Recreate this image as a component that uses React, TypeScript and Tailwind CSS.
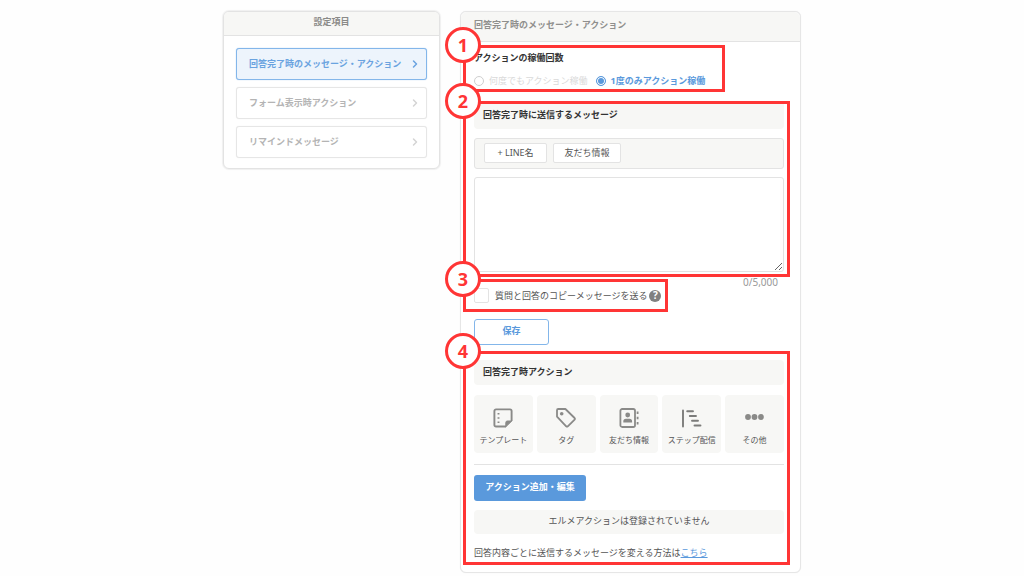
import { useState } from 'react'
import type { ReactNode } from 'react'
import { ChevronRight } from 'lucide-react'

const menuItems = ['回答完了時のメッセージ・アクション', 'フォーム表示時アクション', 'リマインドメッセージ']

function TemplateIcon() {
  return (
    <svg viewBox="0 0 20 20" className="size-5" fill="none" stroke="#8a8a88" strokeWidth="1.9">
      <path d="M13 18.5H3A1.6 1.6 0 0 1 1.4 16.9V3A1.6 1.6 0 0 1 3 1.4H17A1.6 1.6 0 0 1 18.6 3V13" />
      <path d="M12.8 18.8V14.5A1.5 1.5 0 0 1 14.3 13H18.8Z" fill="#8a8a88" strokeWidth="1" />
      <path d="M5.5 5v1.5M5.5 9.2v1.5M5.5 13.4v1.5" />
    </svg>
  )
}

function TagIcon() {
  return (
    <svg viewBox="0 0 20 20" className="size-5" fill="none" stroke="#8a8a88" strokeWidth="1.8">
      <path d="M1 2.2V8.6L10.2 18.3Q11 19 11.800 18.3L18.6 11.6Q19.3 10.8 18.6 10L9.400 1H2.2Q1 1 1 2.2Z" strokeLinejoin="round" />
      <circle cx="5.7" cy="5.7" r="1.8" fill="#8a8a88" stroke="none" />
    </svg>
  )
}

function FriendIcon() {
  return (
    <svg viewBox="0 0 20 20" className="size-5" fill="none" stroke="#8a8a88" strokeWidth="1.8">
      <rect x="1.4" y="1" width="14.6" height="18" rx="1.8" />
      <circle cx="8.7" cy="7" r="2.4" fill="#8a8a88" stroke="none" />
      <path d="M4.3 14.6V13.4Q4.3 10.8 7 10.8H10.4Q13.1 10.8 13.1 13.4V14.6Z" fill="#8a8a88" stroke="none" />
      <path d="M18.6 3.5V6M18.6 8.8V11.2M18.6 14V16.5" />
    </svg>
  )
}

function StepIcon() {
  return (
    <svg viewBox="0 0 20 20" className="size-5" fill="none" stroke="#7c7c7a" strokeWidth="1.9" strokeLinecap="round">
      <path d="M1 2.5V18.5M5.2 3.2H11M7.8 8H14M10 12.800H16M12.500 17.500H18.500" />
    </svg>
  )
}

function MoreIcon() {
  return (
    <svg viewBox="0 0 20 20" className="size-5" fill="#8a8a88">
      <circle cx="3" cy="9" r="2.9" />
      <circle cx="9.5" cy="9" r="2.9" />
      <circle cx="16" cy="9" r="2.9" />
    </svg>
  )
}

const actions = [
  { label: 'テンプレート', icon: <TemplateIcon /> },
  { label: 'タグ', icon: <TagIcon /> },
  { label: '友だち情報', icon: <FriendIcon /> },
  { label: 'ステップ配信', icon: <StepIcon /> },
  { label: 'その他', icon: <MoreIcon /> },
]

// Red frame with a numbered badge on its top left corner
function Step({ no, className, children }: { no: number; className: string; children: ReactNode }) {
  return (
    <section className={`relative border-[3px] border-[#ff3535] pl-2 pr-[3px] ${className}`}>
      {children}
      <span className="absolute -left-[21px] -top-[21px] flex size-9 items-center justify-center rounded-full border-[3px] border-[#ff3535] bg-white font-['Noto_Sans'] text-lg font-bold text-[#ff3535]">
        {no}
      </span>
    </section>
  )
}

const radioClass =
  'size-[10px] shrink-0 appearance-none rounded-full border border-[#cfcfcf] bg-white checked:border-[#5a99dc] checked:bg-[#5a99dc] checked:shadow-[inset_0_0_0_1px_#fff]'

export default function App() {
  const [current, setCurrent] = useState(0)
  const [once, setOnce] = useState(true)
  const [message, setMessage] = useState('')

  return (
    <div
      lang="ja"
      className="min-h-screen bg-[#fefefe] pt-[11px] font-['Noto_Sans','Noto_Sans_CJK_JP',sans-serif] text-[9px] text-[#555]"
    >
      <div className="mx-auto grid w-full max-w-[578px] grid-cols-[217px_1fr] items-start gap-5">
        <aside className="overflow-hidden rounded-md border border-[#e3e3e3] bg-white shadow-[0_0_1px_1px_#f0f0f0]">
          <h2 className="flex h-6 items-center justify-center border-b border-[#e3e3e3] bg-[#f7f7f5] pb-[3px] font-bold text-[#8a8a88]">
            設定項目
          </h2>
          <nav className="flex flex-col gap-[7px] px-3 pb-[10px] pt-3">
            {menuItems.map((item, i) => (
              <button
                key={item}
                onClick={() => setCurrent(i)}
                className={`flex h-8 items-center justify-between rounded-[3px] border pl-3 pr-[5px] font-bold ${
                  i === current
                    ? 'border-[#83b6ea] bg-[#edf4fc] text-[#6aa3e0] shadow-[0_0_1px_#83b6ea]'
                    : 'border-[#e6e6e6] bg-white text-[#b4b4b4] shadow-[0_0_1px_#e6e6e6]'
                }`}
              >
                {item}
                <ChevronRight className={i === current ? 'size-3' : 'size-3 text-[#d4d4d4]'} strokeWidth={3} />
              </button>
            ))}
          </nav>
        </aside>

        <main className="rounded-md border border-[#e6e6e6] bg-white pb-[7px] shadow-[0_0_1px_#e6e6e6]">
          <h1 className="flex h-[30px] items-center rounded-t-md border-b border-[#e3e3e3] bg-[#f7f7f5] px-[13px] pb-[3px] font-bold text-[#8f8f8d]">
            回答完了時のメッセージ・アクション
          </h1>

          <div className="ml-[2px] mr-[10px] mt-[3px]">
            <Step no={1} className="max-w-[262px]">
              <h3 className="font-bold leading-[19px] text-[#333]">アクションの稼働回数</h3>
              <div className="mt-[5px] flex h-[17px] items-center gap-2">
                <label className="flex items-center gap-[5px] whitespace-nowrap text-[#dadada]">
                  <input type="radio" name="count" checked={!once} onChange={() => setOnce(false)} className={radioClass} />
                  何度でもアクション稼働
                </label>
                <label className="flex items-center gap-[5px] whitespace-nowrap font-bold text-[#5a99dc]">
                  <input type="radio" name="count" checked={once} onChange={() => setOnce(true)} className={radioClass} />
                  1度のみアクション稼働
                </label>
              </div>
            </Step>

            <Step no={2} className="mt-[9px] pb-[2px]">
              <h3 className="flex h-[25px] items-center rounded-b bg-[#f7f7f5] px-[9px] pb-[3px] font-bold text-[#333]">
                回答完了時に送信するメッセージ
              </h3>
              <div className="mt-[9px] flex h-[31px] items-center gap-[6px] rounded-[3px] border border-[#e3e3e3] bg-[#f7f7f5] px-[9px] pb-[2px]">
                <button className="h-5 w-[63px] whitespace-nowrap rounded-[2px] border border-[#e3e3e3] bg-white">+ LINE名</button>
                <button className="h-5 w-[68px] whitespace-nowrap rounded-[2px] border border-[#e3e3e3] bg-white">友だち情報</button>
              </div>
              <textarea
                aria-label="回答完了時に送信するメッセージ"
                maxLength={5000}
                value={message}
                onChange={(e) => setMessage(e.target.value)}
                className="mt-2 block h-[95px] w-full resize-y rounded-[3px] border border-[#e3e3e3] bg-white p-2"
              />
            </Step>

            <div className="flex items-start justify-between">
              <Step no={3} className="mt-[2px] w-[205px]">
                <div className="flex h-[27px] items-center gap-[2px]">
                  <label className="flex items-center gap-[6px] whitespace-nowrap">
                    <input
                      type="checkbox"
                      className="size-[15px] shrink-0 appearance-none rounded-[2px] border border-[#e3e3e3] bg-white checked:bg-[#5a99dc]"
                    />
                    質問と回答のコピーメッセージを送る
                  </label>
                  <span className="flex size-3 shrink-0 items-center justify-center rounded-full bg-[#808080] text-[10px] font-bold text-white">
                    ?
                  </span>
                </div>
              </Step>
              <span className="mr-3 text-[10px] leading-[10px] text-[#999]">{message.length}/5,000</span>
            </div>

            <button className="ml-[11px] mt-[7px] block h-[26px] w-[75px] rounded-[3px] border border-[#83b6ea] bg-white pb-[2px] font-bold text-[#5a99dc]">
              保存
            </button>

            <Step no={4} className="mt-[6px] pt-[6px]">
              <h3 className="flex h-[25px] items-center rounded bg-[#f7f7f5] px-[9px] pb-[2px] font-bold text-[#333]">
                回答完了時アクション
              </h3>
              <div className="mt-[10px] grid grid-cols-5 gap-1 border-b border-[#e3e3e3] pb-[11px]">
                {actions.map((action) => (
                  <button
                    key={action.label}
                    className="flex h-[58px] flex-col items-center gap-[6px] whitespace-nowrap rounded bg-[#f7f7f5] pt-[13px] text-[8px] leading-3"
                  >
                    {action.icon}
                    {action.label}
                  </button>
                ))}
              </div>
              <button className="mt-[10px] block h-[26px] w-28 whitespace-nowrap rounded-[3px] bg-[#5a99dc] pb-[2px] font-bold text-white">
                アクション追加・編集
              </button>
              <p className="mt-[9px] flex h-6 items-center justify-center rounded bg-[#f7f7f5] pb-[2px]">
                エルメアクションは登録されていません
              </p>
              <p className="mt-[10px] whitespace-nowrap leading-[18px]">
                回答内容ごとに送信するメッセージを変える方法は
                <a href="#" className="text-[#5a99dc] underline">
                  こちら
                </a>
              </p>
            </Step>
          </div>
        </main>
      </div>
    </div>
  )
}
